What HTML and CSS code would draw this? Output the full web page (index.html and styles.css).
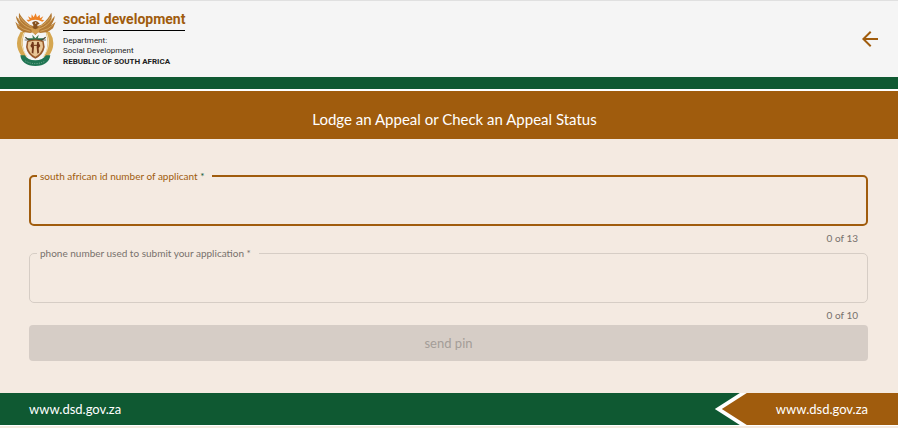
FILE: index.html
```html
<!DOCTYPE html>
<html lang="en">
<head>
    <meta charset="UTF-8">
    <meta name="viewport" content="width=device-width, initial-scale=1.0">
    <title>Lodge an Appeal or Check an Appeal Status</title>
    <link rel="stylesheet" href="styles.css">
</head>
<body>
    <header class="header">
        <div class="brand">
            <svg class="crest" viewBox="45 37 126 165" aria-hidden="true">
                <!-- rising sun -->
                <path d="M85 66 L79 60 L89 60 L84 50 L94 56 L95 44 L101 53 L107 41 L111 53 L119 45 L120 56 L130 50 L124 60 L133 61 L127 66 Q106 55 85 66Z" fill="#ee8326"/>
                <!-- tusks and wheat -->
                <path d="M62 96 Q38 134 66 171 L80 173 Q60 137 74 98Z" fill="#d5a650"/>
                <path d="M149 96 Q173 134 145 171 L131 173 Q151 137 137 98Z" fill="#d5a650"/>
                <path d="M71 100 Q55 137 82 172" fill="none" stroke="#f0dfb8" stroke-width="3"/>
                <path d="M140 100 Q156 137 129 172" fill="none" stroke="#f0dfb8" stroke-width="3"/>
                <!-- wings -->
                <path d="M57 39 Q69 61 89 75 L101 80 L102 96 L91 100 L69 97 L53 86 L46 66 Q54 74 59 76 Q48 61 48 48 L61 66 Q54 52 57 39Z" fill="#b37a35"/>
                <path d="M154 39 Q143 61 124 75 L111 80 L110 96 L121 100 L143 97 L159 86 L167 66 Q158 74 153 76 Q164 61 164 48 L151 66 Q158 52 154 39Z" fill="#b37a35"/>
                <path d="M55 55 Q66 78 94 88 M52 75 Q66 90 91 95 M61 52 Q70 70 94 81 M157 55 Q146 78 118 88 M160 75 Q146 90 121 95 M151 52 Q142 70 118 81" fill="none" stroke="#e2b873" stroke-width="2"/>
                <!-- secretary bird -->
                <path d="M96 69 Q104 61 113 66 L119 72 L112 75 L114 95 L106 106 L98 95 L100 76Z" fill="#85511f"/>
                <path d="M92 83 L106 89 L121 83 L116 98 L106 105 L96 98Z" fill="#d29d50"/>
                <circle cx="107" cy="70" r="2" fill="#f6ead6"/>
                <!-- protea, spear and knobkierie -->
                <path d="M81 116 L131 116 L123 123 L88 123Z" fill="#28704c"/>
                <path d="M97 105 L106 116 L116 105 L113 119 L99 119Z" fill="#3c7950"/>
                <path d="M76 113 L91 125 M137 113 L121 125" stroke="#4b4a34" stroke-width="4"/>
                <path d="M74 121 H138" stroke="#353c30" stroke-width="2"/>
                <!-- shield with two figures -->
                <path d="M81 124 Q106 115 131 124 L134 142 Q130 166 106 177 Q82 166 78 142Z" fill="#985a2c"/>
                <path d="M85 127 Q106 120 127 127 L129 142 Q125 161 106 171 Q87 161 83 142Z" fill="#e9c696"/>
                <path d="M95 131 L101 130 L102 143 L100 162 L95 159 L96 145 L91 139Z M117 131 L111 130 L110 143 L112 162 L117 159 L116 145 L121 139Z" fill="#713619"/>
                <circle cx="98" cy="129" r="3" fill="#713619"/>
                <circle cx="114" cy="129" r="3" fill="#713619"/>
                <path d="M101 137 H111" stroke="#713619" stroke-width="3"/>
                <!-- motto ribbon -->
                <path d="M61 167 L74 167 Q83 182 106 182 Q129 182 138 167 L151 167 Q147 198 106 199 Q65 198 61 167Z" fill="#207553"/>
                <path d="M76 184 Q106 200 136 184" fill="none" stroke="#a9c9b7" stroke-width="2" stroke-dasharray="3 4"/>
            </svg>
            <div class="brand-text">
                <div class="brand-name">social development</div>
                <div class="brand-department">Department:<br>Social Development</div>
                <div class="brand-country">REBUBLIC OF SOUTH AFRICA</div>
            </div>
        </div>
        <button class="back" type="button" aria-label="Back">
            <svg viewBox="0 0 24 24" aria-hidden="true">
                <path d="M20 11H7.83l5.59-5.59L12 4l-8 8 8 8 1.41-1.41L7.83 13H20v-2z" fill="currentColor"/>
            </svg>
        </button>
    </header>

    <main>
        <h1 class="title">Lodge an Appeal or Check an Appeal Status</h1>

        <form class="form">
            <fieldset class="field field-active">
                <legend><label for="id-number">south african id number of applicant <span class="required">*</span></label></legend>
                <input id="id-number" type="text" maxlength="13" required>
            </fieldset>
            <div class="counter">0 of 13</div>

            <fieldset class="field field-disabled">
                <legend><label for="phone-number">phone number used to submit your application *</label></legend>
                <input id="phone-number" type="tel" maxlength="10" required disabled>
            </fieldset>
            <div class="counter">0 of 10</div>

            <button class="send" type="submit" disabled>send pin</button>
        </form>
    </main>

    <footer class="footer">
        <a class="footer-link" href="#">www.dsd.gov.za</a>
        <div class="chevron">
            <div class="chevron-inner">
                <a class="footer-link" href="#">www.dsd.gov.za</a>
            </div>
        </div>
    </footer>
</body>
</html>
```
FILE: styles.css
```css
* {
    margin: 0;
    padding: 0;
    box-sizing: border-box;
}

body {
    font-family: "Gill Sans", "Gill Sans MT", Lato, sans-serif;
    font-size: 12px;
    background: #f4eae1;
}

.header {
    display: flex;
    align-items: center;
    justify-content: space-between;
    padding: 9px 16px 9px 15px;
    background: #f5f5f5;
    border-top: 1px solid #e0e0e0;
    border-bottom: 12px solid #0f5932;
}

.brand {
    display: flex;
    align-items: center;
    gap: 6px;
}

.crest {
    width: 42px;
    height: 55px;
}

.brand-text {
    font-family: Roboto, sans-serif;
    color: #222;
}

.brand-name {
    color: #a05c0d;
    font-size: 14px;
    font-weight: 700;
    line-height: 18px;
    padding-bottom: 2px;
    border-bottom: 1px solid #000;
    margin-bottom: 5px;
}

.brand-department {
    font-size: 8px;
    line-height: 10px;
}

.brand-country {
    font-size: 8px;
    font-weight: 700;
    line-height: 12px;
}

.back {
    width: 24px;
    height: 24px;
    border: none;
    background: none;
    color: #a05c0d;
    cursor: pointer;
}

.back svg {
    display: block;
}

.title {
    padding: 16px 16px 8px 27px;
    border-top: 2px solid #fff;
    background: #a05c0d;
    color: #fff;
    font-size: 15px;
    font-weight: 400;
    line-height: 24px;
    text-align: center;
}

.form {
    padding: 30px 30px 32px 29px;
}

.field {
    min-width: 0;
    padding: 0 7px;
    border: 1px solid #d6cdc5;
    border-radius: 5px;
    color: #77716c;
}

.field legend {
    padding: 0 8px 0 3px;
    font-size: 10px;
    line-height: 14px;
}

.field input {
    display: block;
    width: 100%;
    height: 42px;
    border: none;
    outline: none;
    background: none;
    font: inherit;
    font-size: 16px;
}

.field-active {
    padding: 0 6px;
    border: 2px solid #a05c0d;
    color: #a05c0d;
}

.field-active input {
    height: 41px;
}

.required {
    color: #0f5932;
}

.counter {
    padding: 0 10px;
    margin-top: 4px;
    color: #77716c;
    font-size: 10px;
    line-height: 16px;
    text-align: right;
}

.send {
    display: block;
    width: 100%;
    height: 36px;
    margin-top: 2px;
    border: none;
    border-radius: 4px;
    background: #d6cdc6;
    color: #a49d98;
    font: inherit;
    font-size: 13px;
}

.footer {
    display: flex;
    align-items: center;
    justify-content: space-between;
    padding-left: 29px;
    background: #0f5932;
    border-bottom: 1px solid #fff;
}

.footer-link {
    color: #fff;
    font-size: 13px;
    line-height: 32px;
    text-decoration: none;
}

.chevron {
    padding-left: 7px;
    background: #fff;
    clip-path: polygon(25px 0, 100% 0, 100% 100%, 25px 100%, 0 50%);
}

.chevron-inner {
    padding: 0 30px 0 54px;
    background: #a05c0d;
    clip-path: polygon(25px 0, 100% 0, 100% 100%, 25px 100%, 0 50%);
}
```
